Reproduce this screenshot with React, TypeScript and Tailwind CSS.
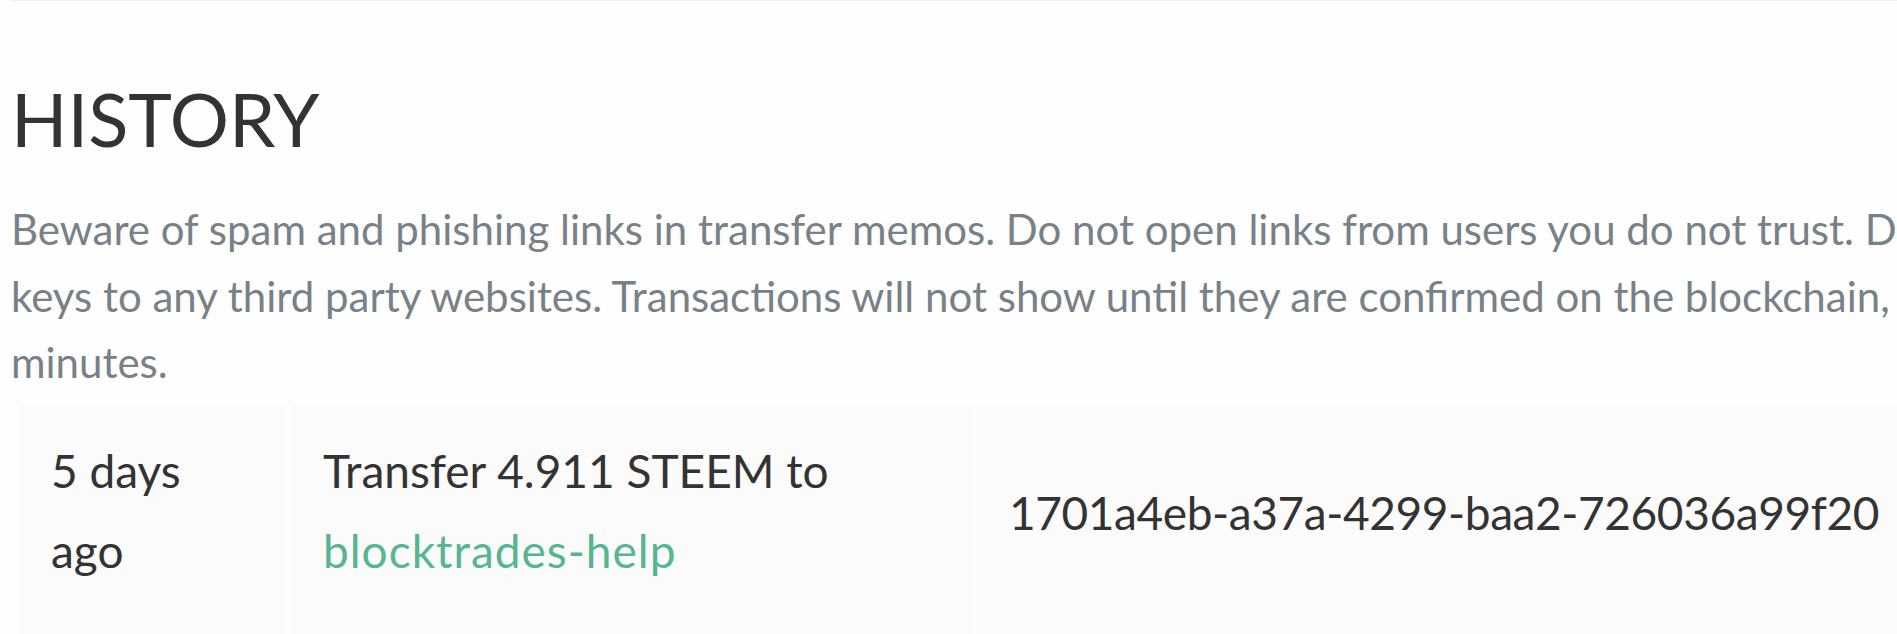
import React from "react";

const rows = [
  {
    when: ["5 days", "ago"],
    memo: "1701a4eb-a37a-4299-baa2-726036a99f20",
    amount: "4.911 STEEM",
    to: "blocktrades-help",
  },
];

const App = () => {
  return (
    <div className="w-[1897px] h-[634px] overflow-hidden bg-[#fefefe] font-['Lato',sans-serif]">
      <div className="ml-[12px] h-px bg-[#efefef]" />
      <div className="w-[2800px] pl-[11px]">
        {/* Heading */}
        <h4 className="mt-[78px] text-[74px] leading-[80px] text-[#333333] font-normal">
          HISTORY
        </h4>

        {/* Warning text */}
        <p className="mt-[37px] text-[42px] leading-[66.5px] text-[#788187]">
          Beware of spam and phishing links in transfer memos. Do not open links from users you do not trust. Do not provide your private
          <br />
          keys to any third party websites. Transactions will not show until they are confirmed on the blockchain, which may take a few
          <br />
          minutes.
        </p>

        {/* Transfer rows */}
        <div className="mt-[8px] ml-[7px] flex flex-col gap-[5px]">
          {rows.map((r, i) => (
            <div key={i} className="flex gap-[5px] text-[46px] leading-[80px] text-[#333333]">
              <div className="w-[267px] h-[260px] bg-[#fbfbfb] pl-[33px] pt-[27px]">
                {r.when[0]}
                <br />
                {r.when[1]}
              </div>
              <div className="w-[681px] h-[260px] bg-[#fbfbfb] pl-[33px] pt-[27px]">
                Transfer {r.amount} to
                <br />
                <a className="text-[#55b68f] tracking-[1px]">{r.to}</a>
              </div>
              <div className="w-[1000px] h-[260px] bg-[#fbfbfb] pl-[33px] pt-[69px] tracking-[-0.4px]">
                {r.memo}
              </div>
            </div>
          ))}
        </div>
      </div>
    </div>
  );
};

export default App;
